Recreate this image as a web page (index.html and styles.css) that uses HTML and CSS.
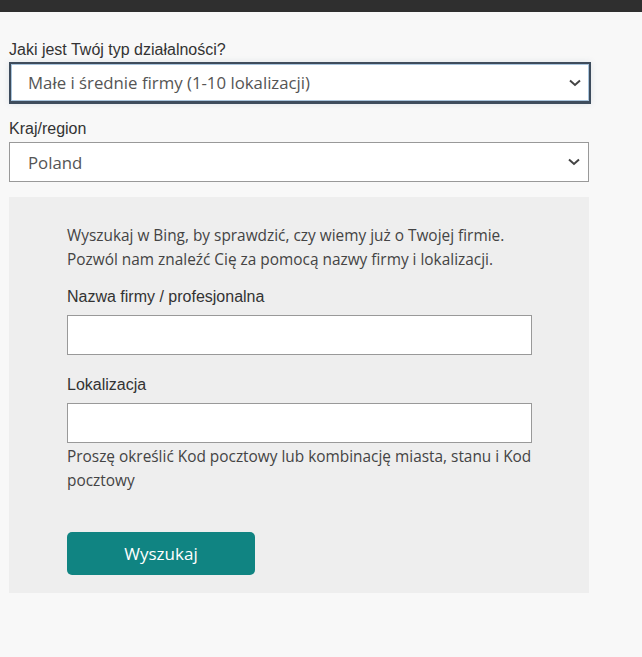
FILE: index.html
```html
<!DOCTYPE html>
<html lang="pl">
<head>
<meta charset="utf-8">
<title>Typ działalności</title>
<link rel="stylesheet" href="styles.css">
</head>
<body>
<div class="topbar"></div>
<main class="form">
  <label class="field-label">Jaki jest Twój typ działalności?</label>
  <div class="select select-focus">
    <span class="select-value">Małe i średnie firmy (1-10 lokalizacji)</span>
    <svg class="chevron" width="12" height="8" viewBox="0 0 12 8"><path d="M1 1.5 L6 6 L11 1.5" fill="none" stroke="#444" stroke-width="2"/></svg>
  </div>
  <label class="field-label label-country">Kraj/region</label>
  <div class="select">
    <span class="select-value">Poland</span>
    <svg class="chevron" width="12" height="8" viewBox="0 0 12 8"><path d="M1 1.5 L6 6 L11 1.5" fill="none" stroke="#444" stroke-width="2"/></svg>
  </div>
  <section class="search-box">
    <p class="intro">Wyszukaj w Bing, by sprawdzić, czy wiemy już o Twojej firmie.<br>Pozwól nam znaleźć Cię za pomocą nazwy firmy i lokalizacji.</p>
    <label class="field-label label-name">Nazwa firmy / profesjonalna</label>
    <input class="text-input" type="text">
    <label class="field-label label-loc">Lokalizacja</label>
    <input class="text-input" type="text">
    <p class="hint">Proszę określić Kod pocztowy lub kombinację miasta, stanu i Kod pocztowy</p>
    <button class="search-btn" type="button">Wyszukaj</button>
  </section>
</main>
</body>
</html>
```

FILE: styles.css
```css
html, body {
  margin: 0;
  padding: 0;
  background: #f8f8f8;
}
body {
  font-family: "Liberation Sans", Arial, sans-serif;
  color: #333;
}
.topbar {
  height: 12px;
  background: #2f2f2f;
}
.form {
  display: flex;
  flex-direction: column;
  padding: 29px 0 0 9px;
  width: 582px;
}
.field-label {
  display: block;
  font-family: "Liberation Sans", Arial, sans-serif;
  font-size: 16px;
  line-height: 18px;
  color: #333;
  margin-bottom: 3px;
}
.label-country {
  margin-top: 16px;
  margin-bottom: 4px;
}
.select {
  box-sizing: border-box;
  display: flex;
  align-items: center;
  justify-content: space-between;
  width: 580px;
  height: 40px;
  background: #fff;
  border: 1px solid #999;
  padding: 0 8px 0 18px;
  font-family: "Open Sans", "Noto Sans", sans-serif;
  font-size: 16.8px;
  color: #555;
}
.select-focus {
  width: 582px;
  height: 42px;
  border: 2px solid #3e4c5c;
  border-bottom-width: 3px;
  box-shadow: inset 0 0 0 1px #a9c4dc, 0 0 6px rgba(80, 110, 140, 0.15);
  padding-left: 17px;
  padding-right: 8px;
}
.chevron {
  display: block;
}
.search-box {
  box-sizing: border-box;
  width: 580px;
  margin-top: 15px;
  background: #eeeeee;
  padding: 27px 0 18px 58px;
}
.intro, .hint {
  font-family: "Open Sans", "Noto Sans", sans-serif;
  font-size: 15.4px;
  line-height: 24px;
  color: #444;
  margin: 0;
}
.label-name {
  margin-top: 16px;
  margin-bottom: 9px;
}
.label-loc {
  margin-top: 21px;
  margin-bottom: 9px;
}
.text-input {
  box-sizing: border-box;
  display: block;
  width: 465px;
  height: 40px;
  border: 1px solid #999;
  background: #fff;
  margin: 0;
  padding: 0 8px;
}
.hint {
  width: 470px;
  margin-top: 2px;
}
.search-btn {
  display: block;
  margin-top: 39px;
  width: 188px;
  height: 43px;
  border: none;
  border-radius: 5px;
  background: #108482;
  color: #fff;
  font-family: "Open Sans", "Noto Sans", sans-serif;
  font-size: 17px;
  cursor: pointer;
}
```
